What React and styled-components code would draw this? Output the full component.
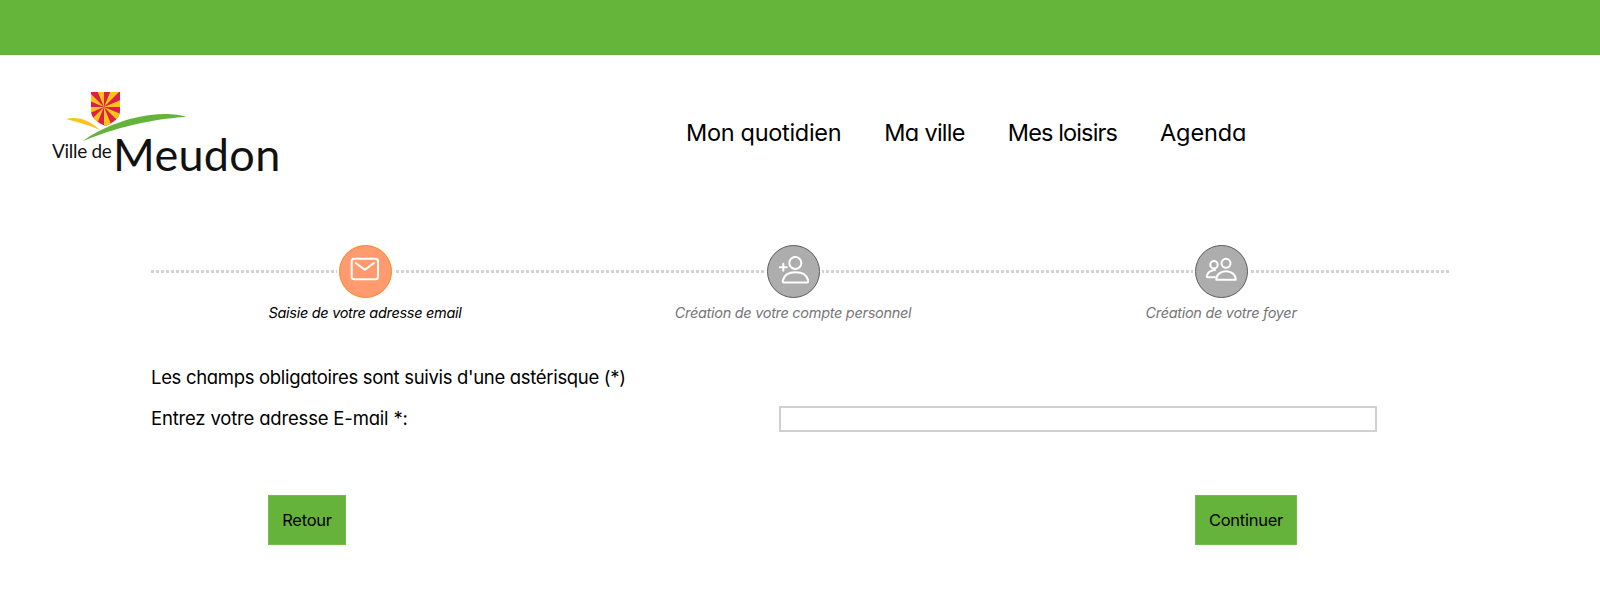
import React from "react";
import styled, { createGlobalStyle } from "styled-components";

const Global = createGlobalStyle`
  html, body { margin: 0; padding: 0; background: #fff; }
  body { font-family: Inter, "Noto Sans", sans-serif; font-feature-settings: "cv11" 1; color: #000; }
`;
const TopBar = styled.div`height: 55px; background: #65b53a;`;
const Header = styled.header`
  height: 156px; display: flex; align-items: center; padding-left: 52px;
`;
const Logo = styled.div`width: 228px; height: 86px; display: flex; flex-direction: column; flex: none;`;
const LogoMark = styled.svg`width: 130px; height: 56px; margin-left: 12px; flex: none;`;
const LogoWords = styled.div`
  display: flex; align-items: baseline; margin-top: -20px; color: #111;
  font-family: Lato, "Open Sans", sans-serif; font-feature-settings: normal;
`;
const LogoVille = styled.span`
  font-size: 19px; letter-spacing: -0.3px; width: 61px; flex: none; white-space: nowrap;
  position: relative; top: -13px;
`;
const LogoCity = styled.span`font-size: 45px; line-height: 56px; letter-spacing: 0.3px;`;
const Nav = styled.nav`display: flex; gap: 43px; margin: 0 0 2px 406px;`;
const NavLink = styled.a`
  font-size: 23.5px; letter-spacing: ${p => p.$track}px; color: #000; white-space: nowrap;
`;
const Main = styled.main`padding-left: 151px; width: 1298px; margin-top: 34px;`;
const Steps = styled.ol`
  list-style: none; margin: 0; padding: 0; display: grid; grid-template-columns: repeat(3, 428px);
  position: relative;
  &::before {
    content: ""; position: absolute; left: 0; width: 1298px; top: 25px; height: 3px;
    background: repeating-linear-gradient(90deg, #d2d2d2 0 3px, transparent 3px 5px);
  }
`;
const Step = styled.li`display: flex; flex-direction: column; align-items: center; position: relative;`;
const Circle = styled.div`
  width: 53px; height: 53px; box-sizing: border-box; border-radius: 50%;
  display: flex; align-items: center; justify-content: center;
  background: ${p => p.$active ? "#ff9b6e" : "#adadad"};
  border: 1.5px solid ${p => p.$active ? "#f58a1f" : "#5c5c5c"};
  box-shadow: 0 0 0 2px #fff;
`;
const StepLabel = styled.span`
  margin-top: 5px; font-size: 14.5px; line-height: 20px; font-style: italic; letter-spacing: -0.3px;
  color: ${p => p.$active ? "#000" : "#777"}; white-space: nowrap;
`;
const Intro = styled.p`margin: 0; padding-top: 42px; font-size: 18.5px; line-height: 24px; letter-spacing: -0.32px;`;
const FieldRow = styled.div`display: flex; align-items: flex-start; height: 26px; margin-top: 17px;`;
const Label = styled.label`width: 628px; flex: none; padding-top: 1px; font-size: 18.5px; line-height: 22px; letter-spacing: -0.18px;`;
const Input = styled.input`width: 598px; height: 26px; box-sizing: border-box; border: 2px solid #d0d0d0; background: #fff; padding: 0; outline: none;`;
const Actions = styled.div`display: flex; justify-content: space-between; margin: 63px 0 0 117px; width: 1029px;`;
const Button = styled.button`
  height: 50px; width: ${p => p.$w}px; border: 1px solid #72bd4a; background: #65b33a; color: #000;
  font-family: inherit; font-feature-settings: inherit; font-size: 16.5px; letter-spacing: -0.25px; padding: 0;
`;

const stroke = { fill: "none", stroke: "#fff", strokeWidth: 2, strokeLinejoin: "round", strokeLinecap: "round" };

const MailIcon = () => (
  <svg width="30" height="30" viewBox="0 0 30 30"><rect x="1.7" y="1.7" width="26.300" height="20.600" rx="2.500" {...stroke} /><path d="M5.700 6l9.200 6.700L24 6" {...stroke} /></svg>
);
const UserPlusIcon = () => (
  <svg width="32" height="38" viewBox="0 0 32 38"><circle cx="18.300" cy="10" r="6" {...stroke} /><path d="M7 29.500c-1 0-1.500-.8-1.200-2 1.200-5 6-8.200 12.700-8.200s11.500 3.200 12.700 8.200c.3 1.200-.2 2-1.200 2z" {...stroke} /><path d="M2.800 14.300h7M6.300 10.800v7" {...stroke} /></svg>
);
const UsersIcon = () => (
  <svg width="32" height="30" viewBox="0 0 32 30"><circle cx="9" cy="7.700" r="3.700" {...stroke} /><circle cx="21" cy="6.300" r="4.500" {...stroke} /><path d="M10 20.300H3c-1 0-1.500-.8-1-2 1-3 4-5 8-5.300" {...stroke} /><path d="M11.300 22.700c0-5 4-8.400 9.700-8.400s9.700 3.400 9.700 8.400z" {...stroke} /></svg>
);

const wedgeAngles = [-22.5, 22.5, 67.5, 112.5, 157.5, 202.5, 247.5, 292.5];
const wedgePath = (start) => {
  const pt = (deg) => {
    const r = (deg * Math.PI) / 180;
    return `${(40 + 45 * Math.sin(r)).toFixed(2)} ${(17 - 45 * Math.cos(r)).toFixed(2)}`;
  };
  return `M40 17L${pt(start)}L${pt(start + 22.5)}z`;
};

const MeudonMark = () => (
  <LogoMark viewBox="0 0 130 56">
    <defs><clipPath id="shield"><path d="M27 2h29v19c0 7-7 12-14.500 15C34 33 27 28 27 21z" /></clipPath></defs>
    <g clipPath="url(#shield)">
      <rect x="27" y="2" width="29" height="36" fill="#dc1f45" />
      {wedgeAngles.map(a => <path key={a} d={wedgePath(a)} fill="#fbc31c" />)}
    </g>
    <path d="M2 29C10 27 22 27 36 40 25 35 13 32 2 29z" fill="#fbc31c" />
    <path d="M19 51C36 38 70 24 100 24 110 24 118 25 122 27 100 28 60 34 19 51z" fill="#65b33a" />
  </LogoMark>
);

export default function App() {
  return (
    <>
      <Global />
      <TopBar />
      <Header>
        <Logo>
          <MeudonMark />
          <LogoWords><LogoVille>Ville de</LogoVille><LogoCity>Meudon</LogoCity></LogoWords>
        </Logo>
        <Nav>
          <NavLink $track={-0.3}>Mon quotidien</NavLink>
          <NavLink $track={-0.72}>Ma ville</NavLink>
          <NavLink $track={-0.87}>Mes loisirs</NavLink>
          <NavLink $track={-0.1}>Agenda</NavLink>
        </Nav>
      </Header>
      <Main>
        <Steps>
          <Step><Circle $active><MailIcon /></Circle><StepLabel $active>Saisie de votre adresse email</StepLabel></Step>
          <Step><Circle><UserPlusIcon /></Circle><StepLabel>Création de votre compte personnel</StepLabel></Step>
          <Step><Circle><UsersIcon /></Circle><StepLabel>Création de votre foyer</StepLabel></Step>
        </Steps>
        <Intro>Les champs obligatoires sont suivis d'une astérisque (*)</Intro>
        <FieldRow>
          <Label htmlFor="email">Entrez votre adresse E-mail *:</Label>
          <Input id="email" type="text" />
        </FieldRow>
        <Actions>
          <Button $w={78}>Retour</Button>
          <Button $w={102}>Continuer</Button>
        </Actions>
      </Main>
    </>
  );
}
